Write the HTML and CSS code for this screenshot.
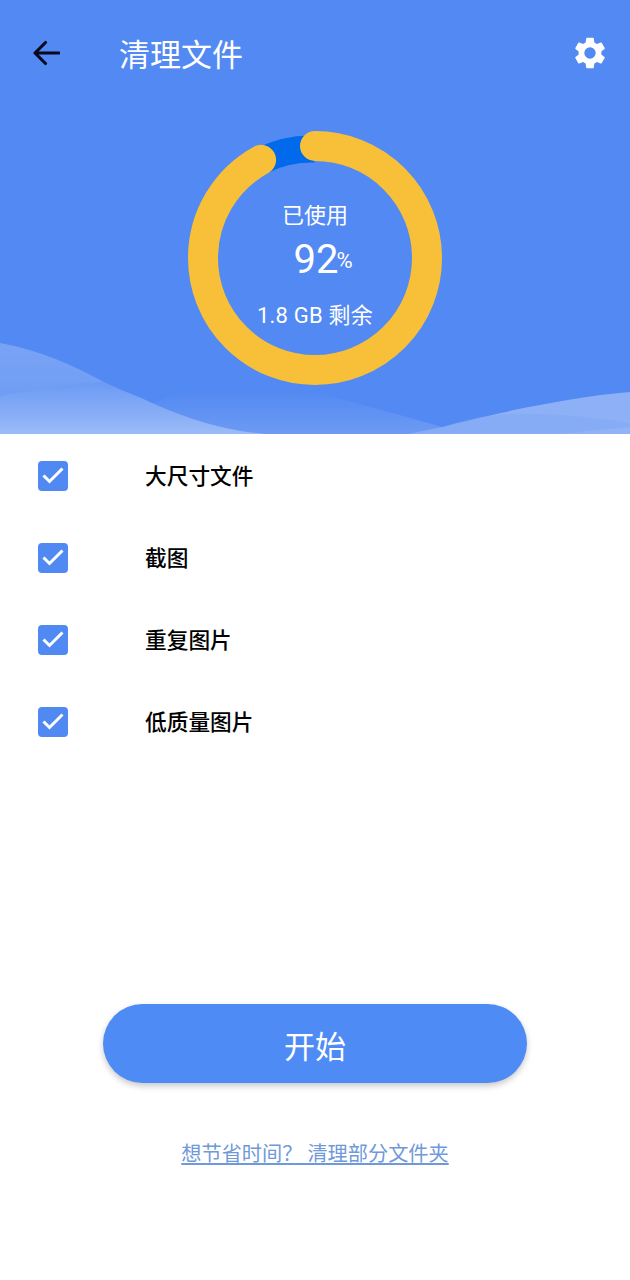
FILE: index.html
```html
<!DOCTYPE html>
<html lang="zh-CN">
<head>
<meta charset="utf-8">
<title>清理文件</title>
<link rel="stylesheet" href="styles.css">
</head>
<body>
<div class="page">
  <header class="hero">
    <svg class="waves" viewBox="0 0 630 434" preserveAspectRatio="none" aria-hidden="true">
      <defs>
        <linearGradient id="fade" x1="0" y1="380" x2="0" y2="434" gradientUnits="userSpaceOnUse">
          <stop offset="0" stop-color="#fff" stop-opacity="0.13"/>
          <stop offset="1" stop-color="#fff" stop-opacity="0.42"/>
        </linearGradient>
        <linearGradient id="band" x1="0" y1="390" x2="0" y2="434" gradientUnits="userSpaceOnUse">
          <stop offset="0" stop-color="#fff" stop-opacity="0"/>
          <stop offset="1" stop-color="#fff" stop-opacity="0.15"/>
        </linearGradient>
        <linearGradient id="rise" x1="0" y1="343" x2="0" y2="396" gradientUnits="userSpaceOnUse">
          <stop offset="0" stop-color="#fff" stop-opacity="0.22"/>
          <stop offset="1" stop-color="#fff" stop-opacity="0.17"/>
        </linearGradient>
      </defs>
      <path d="M260 380C330 395 390 412 442 427L408 434H265C230 431 195 422 152 403C190 390 230 378 260 380Z" fill="url(#band)"/>
      <path d="M0 343C40 350 72 365 104 382C70 384 35 389 0 396Z" fill="url(#rise)"/>
      <path d="M0 396C35 389 70 384 104 382C125 392 140 397 152 403C195 422 230 431 265 434H0Z" fill="url(#fade)"/>
      <path d="M408 434L442 427C480 417 560 398 630 392V434Z" fill="#fff" fill-opacity="0.3"/>
      <path d="M442 427C490 408 560 412 630 423V392C560 398 480 417 442 427Z" fill="#fff" fill-opacity="0.06"/>
      <path d="M560 434L630 427V434Z" fill="#fff" fill-opacity="0.08"/>
    </svg>
    <div class="topbar">
      <svg class="back" viewBox="0 0 28 28" aria-hidden="true">
        <path d="M27 14H3M13.500 3.500L3 14L13.500 24.500" fill="none" stroke="#050a1e" stroke-width="3.100" stroke-linecap="round" stroke-linejoin="round"/>
      </svg>
      <h1 class="title">清理文件</h1>
      <svg class="gear" viewBox="0 0 24 24" aria-hidden="true">
        <path fill="#fff" d="M19.140 12.940c.04-.3.060-.61.060-.94 0-.32-.02-.64-.07-.94l2.030-1.580a.49.490 0 0 0 .12-.61l-1.920-3.320a.49.490 0 0 0-.59-.22l-2.390.96c-.5-.38-1.030-.7-1.620-.94l-.36-2.540a.48.480 0 0 0-.48-.41h-3.840a.47.470 0 0 0-.47.410l-.36 2.540c-.59.24-1.130.57-1.620.94l-2.390-.96a.48.480 0 0 0-.59.220L2.740 8.870a.47.470 0 0 0 .12.610l2.030 1.580c-.05.3-.09.63-.09.94s.02.64.07.94l-2.030 1.580a.49.490 0 0 0-.12.61l1.920 3.320c.12.220.37.290.59.220l2.390-.96c.5.38 1.030.7 1.620.94l.36 2.540c.05.24.24.41.48.41h3.840c.24 0 .44-.17.47-.41l.36-2.540c.59-.24 1.130-.56 1.620-.94l2.390.96c.22.080.47 0 .59-.22l1.920-3.320a.47.470 0 0 0-.12-.61l-2.010-1.580zM12 15.600A3.610 3.610 0 0 1 8.400 12 3.610 3.610 0 0 1 12 8.400a3.610 3.610 0 0 1 3.600 3.600 3.610 3.610 0 0 1-3.600 3.600z"/>
      </svg>
    </div>
    <div class="gauge">
      <svg class="ring" viewBox="0 0 254 254" aria-hidden="true">
        <path d="M73 30A109 109 0 0 1 127 18" fill="none" stroke="#0069ec" stroke-width="27"/>
        <circle cx="127" cy="127" r="112" fill="none" stroke="#f8c038" stroke-width="30" stroke-linecap="round" pathLength="100" stroke-dasharray="92 100" transform="rotate(-90 127 127)"/>
      </svg>
      <div class="readout">
        <div class="used">已使用</div>
        <div class="value">92<span class="pct">%</span></div>
        <div class="left">1.8 GB 剩余</div>
      </div>
    </div>
  </header>
  <ul class="list">
    <li class="row"><svg class="check" viewBox="0 0 30 30" aria-hidden="true"><rect width="30" height="30" rx="4" fill="#5189f2"/><path d="M5.500 14.500L11.500 20.500L24.500 7.500" fill="none" stroke="#fff" stroke-width="3"/></svg><span class="label">大尺寸文件</span></li>
    <li class="row"><svg class="check" viewBox="0 0 30 30" aria-hidden="true"><rect width="30" height="30" rx="4" fill="#5189f2"/><path d="M5.500 14.500L11.500 20.500L24.500 7.500" fill="none" stroke="#fff" stroke-width="3"/></svg><span class="label">截图</span></li>
    <li class="row"><svg class="check" viewBox="0 0 30 30" aria-hidden="true"><rect width="30" height="30" rx="4" fill="#5189f2"/><path d="M5.500 14.500L11.500 20.500L24.500 7.500" fill="none" stroke="#fff" stroke-width="3"/></svg><span class="label">重复图片</span></li>
    <li class="row"><svg class="check" viewBox="0 0 30 30" aria-hidden="true"><rect width="30" height="30" rx="4" fill="#5189f2"/><path d="M5.500 14.500L11.500 20.500L24.500 7.500" fill="none" stroke="#fff" stroke-width="3"/></svg><span class="label">低质量图片</span></li>
  </ul>
  <div class="actions">
    <button class="start" type="button">开始</button>
    <a class="link" href="#">想节省时间？ 清理部分文件夹</a>
  </div>
</div>
</body>
</html>
```
FILE: styles.css
```css
* { box-sizing: border-box; }
html, body { margin: 0; padding: 0; background: #fff; }
body { font-family: Roboto, "Noto Sans CJK SC", sans-serif; }
.page { width: 630px; height: 1280px; display: flex; flex-direction: column; overflow: hidden; }

.hero { position: relative; height: 434px; flex: none; background: #5389f2; display: flex; flex-direction: column; align-items: center; }
.waves { position: absolute; inset: 0; width: 630px; height: 434px; display: block; }
.topbar { position: relative; width: 100%; height: 106px; display: flex; align-items: center; padding: 0 21px 0 32px; }
.back { width: 28px; height: 28px; flex: none; }
.title { margin: 6px 0 0 59px; font-size: 31px; font-weight: 400; line-height: 40px; color: #fff; flex: 1; }
.gear { width: 38px; height: 38px; flex: none; }

.gauge { position: relative; width: 254px; height: 254px; margin-top: 25px; display: grid; }
.ring { grid-area: 1 / 1; width: 254px; height: 254px; display: block; }
.readout { grid-area: 1 / 1; display: flex; flex-direction: column; align-items: center; color: #fff; padding-top: 71px; }
.used { font-size: 22px; line-height: 28px; }
.value { font-size: 40px; line-height: 46px; margin-top: 6px; display: flex; align-items: center; }
.pct { font-size: 22px; margin-left: -2px; margin-right: -16px; padding-top: 2px; }
.left { font-size: 22px; line-height: 28px; margin-top: 18px; letter-spacing: 0.2px; }

.list { list-style: none; margin: 0; padding: 1px 0 0 38px; }
.row { height: 82px; display: flex; align-items: center; }
.check { width: 30px; height: 30px; flex: none; }
.label { margin-left: 77px; padding-bottom: 3px; font-size: 21.700px; font-weight: 500; color: #000; }

.actions { flex: 1; display: flex; flex-direction: column; align-items: center; padding-top: 241px; }
.start { width: 424px; height: 79px; padding: 2px 0 0; border: 0; border-radius: 40px; background: #4f8bf5; color: #fff; font-family: inherit; font-size: 31px; box-shadow: 0 3px 6px rgba(0, 0, 0, 0.22); }
.link { margin-top: 56px; font-size: 20.200px; line-height: 30px; color: #6f99d9; text-decoration: underline; }
```
